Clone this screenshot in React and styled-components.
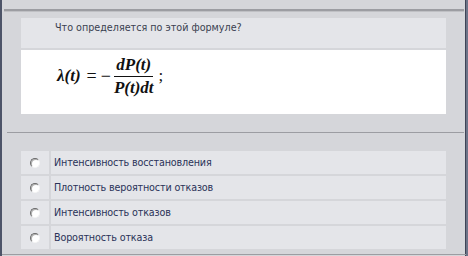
import React from "react";
import styled, { createGlobalStyle } from "styled-components";

const Global = createGlobalStyle`
  html, body { margin: 0; padding: 0; background: #d6d7db; }
  body { font-family: "DejaVu Sans", Verdana, sans-serif; }
`;

const Frame = styled.div`
  width: 468px;
  height: 256px;
  box-sizing: border-box;
  background: #d5d6da;
  border-left: 2px solid #4d5468;
  border-right: 2px solid #6d7488;
  box-shadow: inset -1px 0 0 #3e4456;
  padding-top: 9px;
  display: flex;
  flex-direction: column;
  overflow: hidden;
`;

const Rule = styled.div`
  height: ${(p) => (p.$double ? 2 : 1)}px;
  margin: ${(p) => p.$top || 0}px ${(p) => p.$right}px 0 ${(p) => p.$left}px;
  background: #9c9da2;
  border-bottom: ${(p) => (p.$double ? "1px solid #bfc0c4" : "none")};
  flex: none;
`;

const Card = styled.div`
  margin: ${(p) => p.$top}px 0 0 19px;
  width: 425px;
  display: flex;
  flex-direction: column;
  gap: 2px;
  flex: none;
`;

const QuestionHead = styled.div`
  height: 30px;
  background: #e4e5e9;
  box-sizing: border-box;
  padding: 4px 0 0 34px;
  font-size: 9.6px;
  color: #3a3f50;
`;

const FormulaBox = styled.div`
  height: 64px;
  background: #ffffff;
  display: flex;
  align-items: center;
  padding: 0 0 12px 36px;
  box-sizing: border-box;
  font-family: "Liberation Serif", "Times New Roman", serif;
  font-weight: bold;
  font-style: italic;
  font-size: 17px;
  color: #111;
`;

const Lhs = styled.span`
  margin-right: 3px;
`;

const Op = styled.span`
  font-style: normal;
  font-weight: normal;
  font-size: 18px;
  margin: 0 ${(p) => p.$gap}px;
`;

const Fraction = styled.span`
  display: inline-flex;
  flex-direction: column;
  align-items: center;
  margin-left: 1px;
`;

const Num = styled.span`
  padding: 0 2px 2px;
  border-bottom: 1px solid #111;
  line-height: 18px;
`;

const Den = styled.span`
  padding: 2px 1px 0;
  line-height: 18px;
`;

const Semi = styled.span`
  font-style: normal;
  font-weight: normal;
  margin-left: 4px;
`;

const Options = styled.div`
  margin: 18px 0 0 19px;
  width: 425px;
  display: flex;
  flex-direction: column;
  gap: 2px;
  flex: none;
`;

const Row = styled.label`
  display: flex;
  gap: 2px;
  height: 23px;
`;

const RadioCell = styled.span`
  width: 28px;
  background: #e4e5e9;
  display: flex;
  align-items: center;
  justify-content: center;
  flex: none;
`;

const Radio = styled.span`
  width: 8px;
  height: 8px;
  border-radius: 50%;
  background: #fff;
  border: 1px solid;
  border-color: #6a6a6a #f4f4f4 #f4f4f4 #6a6a6a;
  box-shadow: inset 1px 1px 0 #b0b0b0;
`;

const TextCell = styled.span`
  flex: 1;
  background: #e4e5e9;
  display: flex;
  align-items: center;
  padding-left: 3px;
  font-size: 9.6px;
  letter-spacing: -0.15px;
  color: #2a3258;
`;

const options = [
  "Интенсивность восстановления",
  "Плотность вероятности отказов",
  "Интенсивность отказов",
  "Вороятность отказа",
];

export default function App() {
  return (
    <>
      <Global />
      <Frame>
        <Rule $double $left={2} $right={2} />
        <Card $top={6}>
          <QuestionHead>Что определяется по этой формуле?</QuestionHead>
          <FormulaBox>
            <Lhs>λ(t)</Lhs>
            <Op $gap={3}>=</Op>
            <Op $gap={1}>−</Op>
            <Fraction>
              <Num>dP(t)</Num>
              <Den>P(t)dt</Den>
            </Fraction>
            <Semi>;</Semi>
          </FormulaBox>
        </Card>
        <Rule $left={5} $right={2} $top={18} />
        <Options>
          {options.map((o) => (
            <Row key={o}>
              <RadioCell>
                <Radio />
              </RadioCell>
              <TextCell>{o}</TextCell>
            </Row>
          ))}
        </Options>
        <Rule $left={0} $right={0} $top={5} />
      </Frame>
    </>
  );
}
